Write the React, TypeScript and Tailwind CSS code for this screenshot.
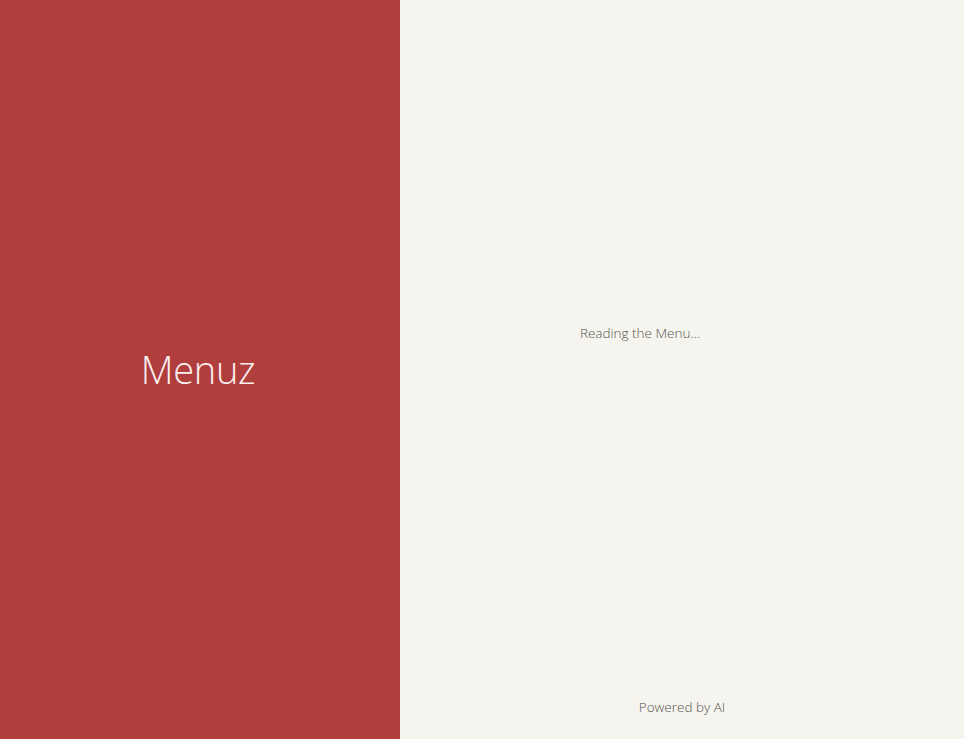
import React from 'react';

export default function App() {
  return (
    <div
      className="flex h-[739px] w-full overflow-hidden"
      style={{ fontFamily: '"Open Sans", "Noto Sans", sans-serif' }}
    >
      {/* Brand panel */}
      <div className="flex w-[400px] shrink-0 items-center justify-center bg-[#b03e3c]">
        <h1 className="pr-[4px] text-[38px] font-light tracking-[-0.3px] text-[#fbeeee]">Menuz</h1>
      </div>

      {/* Loading panel */}
      <div className="flex flex-1 flex-col bg-[#f5f4ee]">
        <div className="flex flex-1 items-center justify-center pr-[84px] pb-[30px]">
          <p className="text-[13.5px] font-light text-[#55544f]">Reading the Menu...</p>
        </div>
        <p className="pb-[22px] text-center text-[13.5px] font-light text-[#55544f]">Powered by AI</p>
      </div>
    </div>
  );
}
